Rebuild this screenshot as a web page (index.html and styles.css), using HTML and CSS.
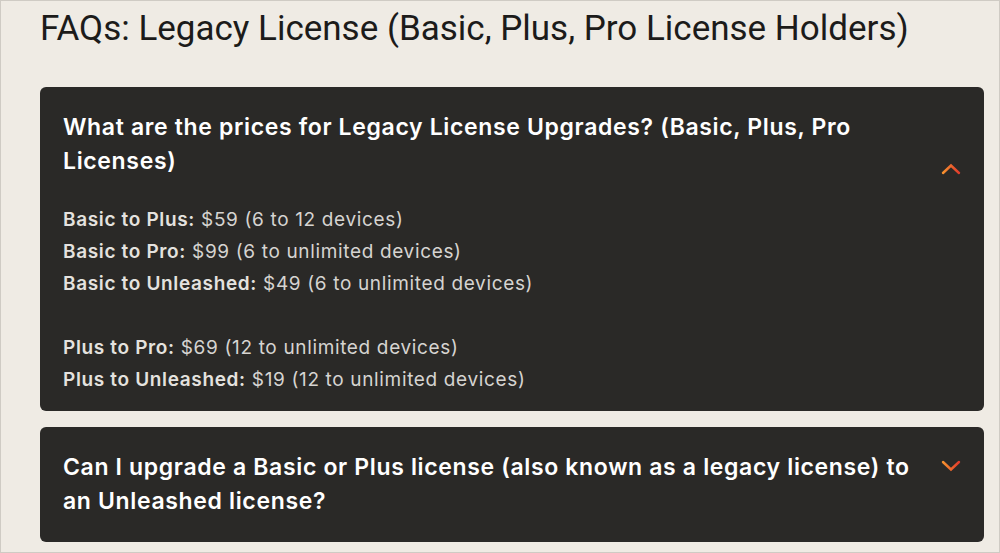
FILE: index.html
```html
<!DOCTYPE html>
<html lang="en">
<head>
    <meta charset="UTF-8">
    <meta name="viewport" content="width=device-width,initial-scale=1">
    <title>FAQs: Legacy License</title>
    <link rel="stylesheet" href="styles.css">
</head>
<body>
    <div class="page">
        <h2 class="faq-title">FAQs: Legacy License (Basic, Plus, Pro License Holders)</h2>

        <div class="faq-list">
            <div class="faq-item is-open">
                <div class="faq-question">
                    <h3>What are the prices for Legacy License Upgrades? (Basic, Plus, Pro Licenses)</h3>
                    <svg class="faq-icon" width="20" height="12" viewBox="0 0 20 12">
                        <defs>
                            <linearGradient id="chevUp" x1="0" y1="0" x2="1" y2="0">
                                <stop offset="0" stop-color="#f7922e"/>
                                <stop offset="1" stop-color="#e23b2c"/>
                            </linearGradient>
                        </defs>
                        <path d="M2 10 L10 2.5 L18 10" fill="none" stroke="url(#chevUp)" stroke-width="2.4" stroke-linecap="round"/>
                    </svg>
                </div>
                <div class="faq-answer">
                    <b>Basic to Plus:</b> $59 (6 to 12 devices)<br>
                    <b>Basic to Pro:</b> $99 (6 to unlimited devices)<br>
                    <b>Basic to Unleashed:</b> $49 (6 to unlimited devices)<br>
                    <br>
                    <b>Plus to Pro:</b> $69 (12 to unlimited devices)<br>
                    <b>Plus to Unleashed:</b> $19 (12 to unlimited devices)
                </div>
            </div>

            <div class="faq-item">
                <div class="faq-question">
                    <h3>Can I upgrade a Basic or Plus license (also known as a legacy license) to an Unleashed license?</h3>
                    <svg class="faq-icon" width="20" height="12" viewBox="0 0 20 12">
                        <defs>
                            <linearGradient id="chevDown" x1="0" y1="0" x2="1" y2="0">
                                <stop offset="0" stop-color="#f7922e"/>
                                <stop offset="1" stop-color="#e23b2c"/>
                            </linearGradient>
                        </defs>
                        <path d="M2 2 L10 9.5 L18 2" fill="none" stroke="url(#chevDown)" stroke-width="2.4" stroke-linecap="round"/>
                    </svg>
                </div>
            </div>
        </div>
    </div>
</body>
</html>
```

FILE: styles.css
```css
html {
    height: 100%;
}
body {
    margin: 0;
    min-height: 100%;
    background: #efebe4;
    font-family: Inter, "Liberation Sans", sans-serif;
    box-sizing: border-box;
    border: 1px solid #cfcbc4;
}
.page {
    padding: 0 15px 0 39px;
}
.faq-title {
    margin: 0;
    padding-top: 6px;
    font-family: Roboto, "Liberation Sans", sans-serif;
    font-size: 35px;
    line-height: 44px;
    font-weight: 400;
    color: #1c1b1a;
}
.faq-list {
    display: flex;
    flex-direction: column;
    gap: 16px;
    margin-top: 36px;
}
.faq-item {
    background: #2a2927;
    border-radius: 6px;
    padding: 23px 23px 24px 23px;
}
.faq-item.is-open {
    padding-bottom: 15px;
}
.faq-question {
    display: flex;
    align-items: flex-start;
    gap: 22px;
}
.faq-question h3 {
    flex: 1;
    margin: 0;
    font-size: 23px;
    line-height: 34px;
    font-weight: 600;
    letter-spacing: 0.65px;
    color: #ffffff;
}
.faq-icon {
    flex: none;
    margin-top: 10px;
}
.is-open .faq-icon {
    margin-top: 53px;
}
.faq-answer {
    margin-top: 26px;
    font-size: 19px;
    line-height: 32px;
    letter-spacing: 0.65px;
    color: #d6d4d1;
}
.faq-answer b {
    font-weight: 600;
    color: #e4e2df;
}
```
